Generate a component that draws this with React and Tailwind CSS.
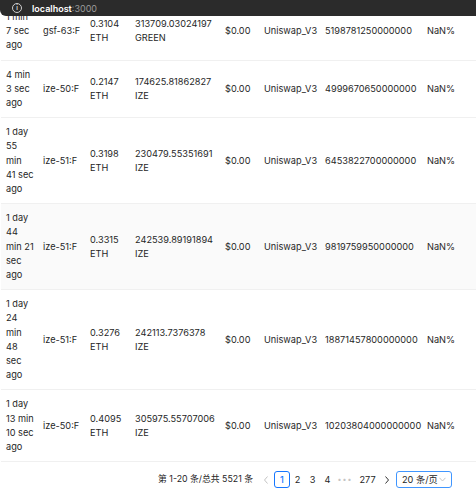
import React from "react";

const rows = [
  { age: ["1 min", "7 sec", "ago"], pool: "gsf-63:F", eth: "0.3104", amt: "313709.03024197", token: "GREEN", liq: "5198781250000000" },
  { age: ["4 min", "3 sec", "ago"], pool: "ize-50:F", eth: "0.2147", amt: "174625.81862827", token: "IZE", liq: "4999670650000000" },
  { age: ["1 day", "55", "min", "41 sec", "ago"], pool: "ize-51:F", eth: "0.3198", amt: "230479.55351691", token: "IZE", liq: "6453822700000000" },
  { age: ["1 day", "44", "min 21", "sec", "ago"], pool: "ize-51:F", eth: "0.3315", amt: "242539.89191894", token: "IZE", liq: "9819759950000000", hover: true },
  { age: ["1 day", "24", "min", "48", "sec", "ago"], pool: "ize-51:F", eth: "0.3276", amt: "242113.7376378", token: "IZE", liq: "18871457800000000" },
  { age: ["1 day", "13 min", "10 sec", "ago"], pool: "ize-50:F", eth: "0.4095", amt: "305975.55707006", token: "IZE", liq: "10203804000000000" },
];

const Lines = ({ items }) => (
  <div className="flex flex-col">
    {items.map((t, i) => (
      <span key={i} className="whitespace-nowrap">{t}</span>
    ))}
  </div>
);

const PageItem = ({ children, className = "" }) => (
  <div className={`h-[17px] shrink-0 flex items-center justify-center ${className}`}>{children}</div>
);

export default function App() {
  return (
    <div
      className="w-[476px] h-[499px] overflow-hidden bg-white flex flex-col text-[#262626]"
      style={{ fontFamily: "Inter, 'Noto Sans CJK SC', sans-serif" }}
    >
      {/* browser address bar */}
      <div className="h-[16px] shrink-0 bg-[#2b2b2b] flex items-center pl-[12px] rounded-bl-[6px]">
        <div className="w-[10px] h-[10px] shrink-0 rounded-full border border-[#cfcfcf] flex items-center justify-center text-[6px] font-bold text-[#cfcfcf] leading-none">
          i
        </div>
        <span className="ml-[10px] text-[9px] font-semibold text-white leading-none">
          localhost<span className="font-normal text-[#9a9a9a]">:3000</span>
        </span>
      </div>

      {/* table */}
      <div className="overflow-hidden shrink-0">
        <table className="table-fixed border-collapse -mt-[13px] ml-[1px] w-[475px] text-[9.2px] leading-[14.2px]">
          <colgroup>
            <col className="w-[37px]" />
            <col className="w-[47px]" />
            <col className="w-[45px]" />
            <col className="w-[90px]" />
            <col className="w-[39px]" />
            <col className="w-[61px]" />
            <col className="w-[102px]" />
            <col className="w-[54px]" />
          </colgroup>
          <tbody>
            {rows.map((r, i) => (
              <tr key={i} className={`border-b border-[#f0f0f0] ${r.hover ? "bg-[#fafafa]" : ""}`}>
                <td className="px-[5px] py-[7px] align-middle"><Lines items={r.age} /></td>
                <td className="px-[5px] py-[7px] align-middle whitespace-nowrap">{r.pool}</td>
                <td className="px-[5px] py-[7px] align-middle"><Lines items={[r.eth, "ETH"]} /></td>
                <td className="px-[5px] py-[7px] align-middle"><Lines items={[r.amt, r.token]} /></td>
                <td className="px-[5px] py-[7px] align-middle">$0.00</td>
                <td className="px-[5px] py-[7px] align-middle whitespace-nowrap">Uniswap_V3</td>
                <td className="px-[5px] py-[7px] align-middle whitespace-nowrap">{r.liq}</td>
                <td className="px-[5px] py-[7px] align-middle">NaN%</td>
              </tr>
            ))}
          </tbody>
        </table>
      </div>

      {/* pagination */}
      <div className="mt-[9px] flex items-center justify-end pr-[24px] text-[9.2px] leading-none">
        <span className="mr-[5px] text-[8.8px]">第 1-20 条/总共 5521 条</span>
        <PageItem className="w-[16px] text-[#c4c4c4]">
          <svg width="6" height="8" viewBox="0 0 6 8" fill="none" stroke="currentColor" strokeWidth="1">
            <path d="M4.5 0.5 L1.5 4 L4.5 7.5" />
          </svg>
        </PageItem>
        <PageItem className="w-[16px] border border-[#1677ff] rounded-[3px] text-[#1677ff] font-medium">1</PageItem>
        <PageItem className="w-[15px]">2</PageItem>
        <PageItem className="w-[15px]">3</PageItem>
        <PageItem className="w-[15px]">4</PageItem>
        <PageItem className="w-[20px] text-[#c4c4c4] tracking-[1px] text-[7px]">•••</PageItem>
        <PageItem className="w-[25px]">277</PageItem>
        <PageItem className="w-[14px] text-[#333]">
          <svg width="6" height="8" viewBox="0 0 6 8" fill="none" stroke="currentColor" strokeWidth="1">
            <path d="M1.5 0.5 L4.5 4 L1.5 7.5" />
          </svg>
        </PageItem>
        <div className="ml-[2px] w-[56px] h-[17px] border border-[#4096ff] rounded-[3px] flex items-center justify-between px-[5px]">
          <span>20 条/页</span>
          <svg width="7" height="5" viewBox="0 0 7 5" fill="none" stroke="#bfbfbf" strokeWidth="0.9">
            <path d="M0.5 0.8 L3.5 4 L6.5 0.8" />
          </svg>
        </div>
      </div>
    </div>
  );
}
